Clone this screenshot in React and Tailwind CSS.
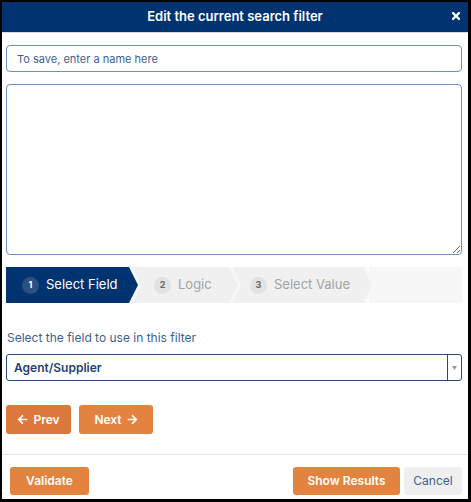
import React, { useState } from 'react';

const steps = [
  { n: 1, label: 'Select Field', width: 'w-[132px]', pad: 'pl-[16px]', active: true },
  { n: 2, label: 'Logic', width: 'w-[106px]', pad: 'pl-[22px]' },
  { n: 3, label: 'Select Value', width: 'w-[140px]', pad: 'pl-[18px]' },
];

const ArrowLeft = () => (
  <svg width="11" height="11" viewBox="0 0 448 512" fill="currentColor">
    <path d="M257.5 445.1l-22.2 22.2c-9.4 9.4-24.6 9.4-33.9 0L7 273c-9.4-9.4-9.4-24.6 0-33.9L201.4 44.7c9.4-9.4 24.6-9.4 33.9 0l22.2 22.2c9.5 9.5 9.300 25-.4 34.3L136.6 216H424c13.3 0 24 10.7 24 24v32c0 13.3-10.7 24-24 24H136.6l120.5 114.8c9.8 9.3 10 24.8.4 34.3z" />
  </svg>
);

const ArrowRight = () => (
  <svg width="11" height="11" viewBox="0 0 448 512" fill="currentColor">
    <path d="M190.5 66.9l22.2-22.2c9.4-9.4 24.6-9.4 33.9 0L441 239c9.4 9.4 9.4 24.6 0 33.9L246.6 467.3c-9.4 9.4-24.6 9.4-33.9 0l-22.2-22.2c-9.5-9.5-9.3-25 .4-34.3L311.4 296H24c-13.3 0-24-10.7-24-24v-32c0-13.3 10.7-24 24-24h287.4L190.9 101.2c-9.8-9.3-10-24.8-.4-34.3z" />
  </svg>
);

export default function App() {
  const [name, setName] = useState('');

  return (
    <div className="w-[471px] h-[502px] bg-black pt-[2px] pl-[2px] pr-[3px] pb-[3px] font-['Inter',sans-serif]">
      <div className="h-full bg-white flex flex-col">
        {/* Header */}
        <div className="h-[31px] shrink-0 bg-[#00336f] border-b border-[#d9dde3] flex items-center justify-center relative">
          <h2 className="text-[13px] font-semibold text-white">Edit the current search filter</h2>
          <button className="absolute right-[6px] top-[8px] text-white">
            <svg width="12" height="12" viewBox="0 0 352 512" fill="currentColor">
              <path d="M242.72 256l100.07-100.07c12.28-12.28 12.28-32.19 0-44.48l-22.24-22.24c-12.28-12.28-32.19-12.280-44.48 0L176 189.28 75.93 89.21c-12.28-12.28-32.19-12.28-44.48 0L9.21 111.45c-12.28 12.28-12.28 32.19 0 44.48L109.28 256 9.21 356.07c-12.28 12.28-12.28 32.19 0 44.48l22.24 22.24c12.28 12.28 32.2 12.28 44.48 0L176 322.72l100.07 100.07c12.28 12.28 32.2 12.28 44.48 0l22.24-22.24c12.28-12.28 12.28-32.19 0-44.48L242.72 256z" />
            </svg>
          </button>
        </div>

        {/* Body */}
        <div className="pl-[4px] pr-[6px] pt-[12px] flex flex-col">
          <input
            value={name}
            onChange={(e) => setName(e.target.value)}
            placeholder="To save, enter a name here"
            className="h-[27px] w-full rounded-[4px] border border-[#6f8fbf] px-[10px] text-[11px] text-[#2a4a7a] placeholder:text-[#3d5f8f] outline-none"
          />
          <textarea className="mt-[12px] h-[171px] w-full rounded-[4px] border border-[#6f8fbf] p-[8px] text-[11px] outline-none" />

          {/* Wizard */}
          <div className="mt-[12px] h-[36px] flex bg-[#f7f7f7]">
            {steps.map((s, i) => (
              <div
                key={s.n}
                className={`${s.width} ${s.pad} h-full shrink-0 flex items-center ${i === 0 ? 'bg-[#00336f] [clip-path:polygon(0_0,calc(100%-9px)_0,100%_50%,calc(100%-9px)_100%,0_100%)]' : '-ml-[6px] bg-[#f0f0f0] [clip-path:polygon(0_0,calc(100%-9px)_0,100%_50%,calc(100%-9px)_100%,0_100%,9px_50%)]'}`}
              >
                <span
                  className={`w-[17px] h-[17px] rounded-full flex items-center justify-center text-[9px] font-bold ${s.active ? 'bg-[#2b5082] text-white' : 'bg-[#e2e2e2] text-[#666]'}`}
                >
                  {s.n}
                </span>
                <span className={`ml-[7px] text-[13px] ${s.active ? 'text-white' : 'text-[#a3a3a3]'}`}>{s.label}</span>
              </div>
            ))}
            <div className="-ml-[6px] flex-1 h-full bg-[#f7f7f7] border-l-[3px] border-white [clip-path:polygon(0_0,100%_0,100%_100%,0_100%,9px_50%)]" />
          </div>

          <p className="mt-[26px] pl-[1px] text-[12px] text-[#3d5f8f]">Select the field to use in this filter</p>

          <div className="mt-[7px] h-[27px] flex rounded-[3px] border border-[#2a4a7a]">
            <div className="flex-1 flex items-center px-[7px] text-[12px] font-semibold text-[#1f3f73]">Agent/Supplier</div>
            <div className="w-[14px] border-l border-[#2a4a7a] flex items-center justify-center">
              <svg width="5" height="4" viewBox="0 0 5 4" fill="#999">
                <path d="M0 0h5L2.5 4z" />
              </svg>
            </div>
          </div>

          <div className="mt-[24px] flex gap-[8px]">
            <button className="h-[29px] w-[65px] rounded-[3px] bg-[#dc783c] text-white text-[12px] font-semibold flex items-center justify-center gap-[5px]">
              <ArrowLeft /> Prev
            </button>
            <button className="h-[29px] w-[74px] rounded-[3px] bg-[#e2843f] text-white text-[12px] font-semibold flex items-center justify-center gap-[5px]">
              Next <ArrowRight />
            </button>
          </div>
        </div>

        {/* Footer */}
        <div className="mt-auto border-t border-[#e3e3e3] h-[45px] flex items-start pt-[12px] pl-[8px] pr-[6px]">
          <button className="h-[28px] w-[79px] rounded-[3px] bg-[#e2843f] text-white text-[12px] font-semibold">Validate</button>
          <button className="ml-auto h-[28px] w-[107px] rounded-[3px] bg-[#e2843f] text-white text-[12px] font-semibold">Show Results</button>
          <button className="ml-[4px] h-[28px] w-[58px] rounded-[3px] bg-[#efefef] text-[#3d5f8f] text-[12px]">Cancel</button>
        </div>
      </div>
    </div>
  );
}
